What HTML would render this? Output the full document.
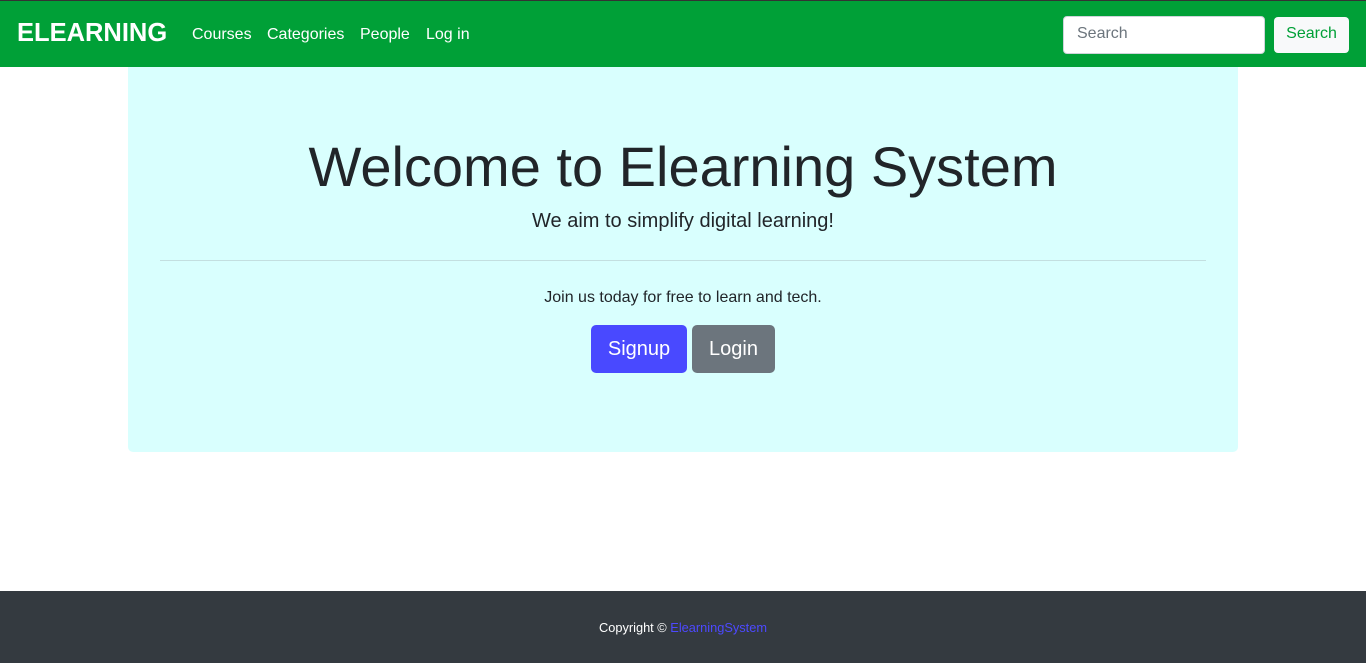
<!DOCTYPE html>
<html><head><style>
*{box-sizing:border-box;margin:0;padding:0}
body{width:1366px;height:663px;font-family:"Liberation Sans",sans-serif;background:#fff;position:relative;overflow:hidden;color:#212529}
.nav{position:absolute;left:0;top:0;width:1366px;height:67px;background:#00a037;border-top:1px solid #333}
.brand{position:absolute;left:17px;top:18px;font-size:25.5px;font-weight:bold;color:#fff}
.links a{position:absolute;top:25px;font-size:16px;color:#fff;text-decoration:none}
.inp{position:absolute;left:1063px;top:15px;width:202px;height:38px;background:#fff;border-radius:4px;border:1px solid #ced4da;font-size:16px;color:#6c757d;padding:8px 13px}
.btn{position:absolute;left:1274px;top:16px;width:75px;height:36px;background:#f8f9fa;border-radius:4px;color:#00a037;font-size:16px;text-align:center;line-height:34px}
.jumbo{position:absolute;left:128px;top:67px;width:1110px;height:385px;background:#d9fffe;border-radius:0 0 5px 5px}
h1{position:absolute;left:0;width:100%;top:70px;text-align:center;font-size:56px;font-weight:normal;line-height:60px}
.lead{position:absolute;width:100%;top:143px;text-align:center;font-size:20px}
hr{position:absolute;left:32px;width:1046px;top:193px;border:0;border-top:1px solid #c3dfe0}
.p{position:absolute;width:100%;top:222px;text-align:center;font-size:16px}
.b{position:absolute;top:258px;height:48px;border-radius:5px;color:#fff;font-size:20px;text-align:center;line-height:49px}
.foot{position:absolute;left:0;top:591px;width:1366px;height:72px;background:#343a40;color:#fff;font-size:12.8px;text-align:center;padding-top:29px}
.foot span{color:#4d49ff}
</style></head><body>
<div class="nav">
<div class="brand">ELEARNING</div>
<div class="links"><a style="left:192px">Courses</a><a style="left:267px">Categories</a><a style="left:360px">People</a><a style="left:426px">Log in</a></div>
<div class="inp">Search</div>
<div class="btn">Search</div>
</div>
<div class="jumbo">
<h1>Welcome to Elearning System</h1>
<div class="lead">We aim to simplify digital learning!</div>
<hr>
<div class="p">Join us today for free to learn and tech.</div>
<div class="b" style="left:463px;width:96px;background:#4949ff">Signup</div>
<div class="b" style="left:564px;width:83px;background:#6c757d">Login</div>
</div>
<div class="foot">Copyright © <span>ElearningSystem</span></div>
</body></html>
